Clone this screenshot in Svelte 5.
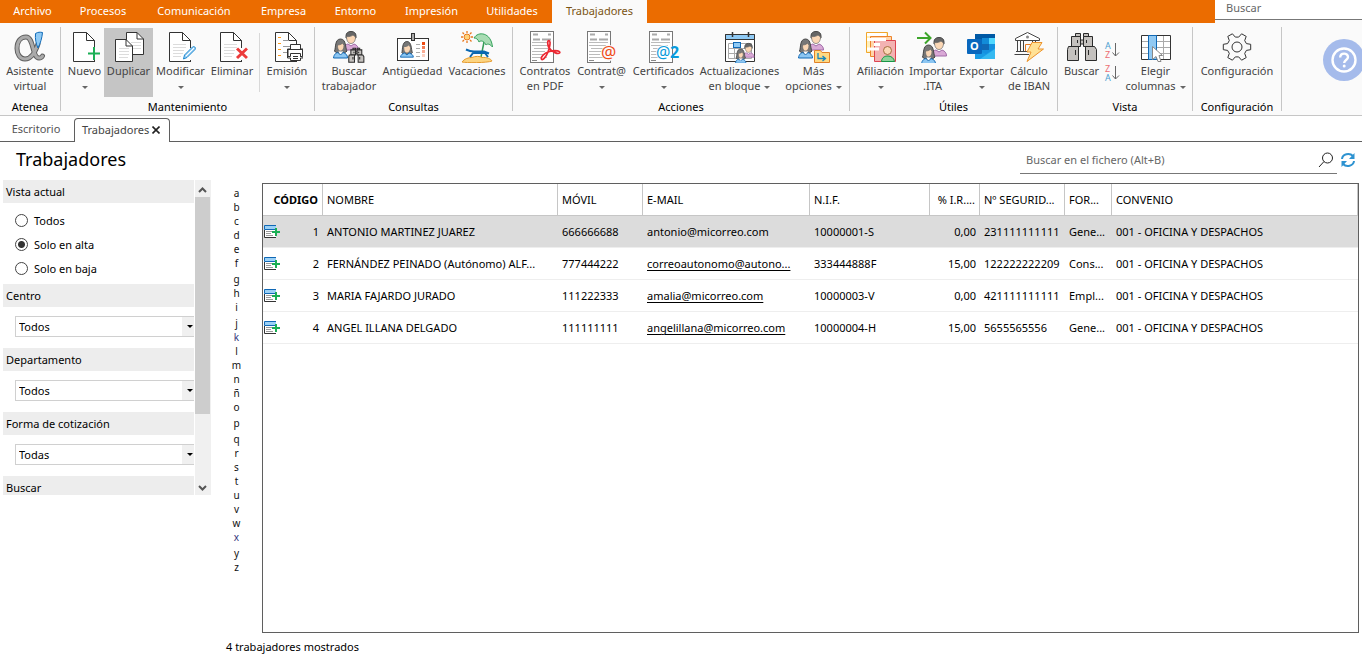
<script>
	const menu = [
		{ label: 'Archivo', width: 65 },
		{ label: 'Procesos', width: 76 },
		{ label: 'Comunicación', width: 106 },
		{ label: 'Empresa', width: 73 },
		{ label: 'Entorno', width: 71 },
		{ label: 'Impresión', width: 81 },
		{ label: 'Utilidades', width: 80 },
		{ label: 'Trabajadores', width: 95 }
	];

	const groups = [
		{ name: 'Atenea', tools: [{ icon: 'atenea', lines: ['Asistente', 'virtual'], width: 52 }] },
		{
			name: 'Mantenimiento',
			tools: [
				{ icon: 'nuevo', lines: ['Nuevo'], menu: true, width: 39 },
				{ icon: 'duplicar', lines: ['Duplicar'], width: 49 },
				{ icon: 'modificar', lines: ['Modificar'], menu: true, width: 55 },
				{ icon: 'eliminar', lines: ['Eliminar'], width: 48 },
				{ icon: 'emision', lines: ['Emisión'], menu: true, width: 46, split: true }
			]
		},
		{
			name: 'Consultas',
			tools: [
				{ icon: 'buscarTrabajador', lines: ['Buscar', 'trabajador'], width: 60 },
				{ icon: 'antiguedad', lines: ['Antigüedad'], width: 67 },
				{ icon: 'vacaciones', lines: ['Vacaciones'], width: 62 }
			]
		},
		{
			name: 'Acciones',
			tools: [
				{ icon: 'pdf', lines: ['Contratos', 'en PDF'], width: 56 },
				{ icon: 'contrata', lines: ['Contrat@'], menu: true, width: 57 },
				{ icon: 'certificados', lines: ['Certificados'], menu: true, width: 67 },
				{ icon: 'bloque', lines: ['Actualizaciones', 'en bloque'], menu: true, width: 85 },
				{ icon: 'opciones', lines: ['Más', 'opciones'], menu: true, width: 63 }
			]
		},
		{
			name: 'Útiles',
			tools: [
				{ icon: 'afiliacion', lines: ['Afiliación'], menu: true, width: 53 },
				{ icon: 'importar', lines: ['Importar', '.ITA'], width: 51 },
				{ icon: 'exportar', lines: ['Exportar'], menu: true, width: 47 },
				{ icon: 'iban', lines: ['Cálculo', 'de IBAN'], width: 48 }
			]
		},
		{
			name: 'Vista',
			tools: [
				{ icon: 'buscar', lines: ['Buscar'], width: 39 },
				{ icon: 'orden', width: 22 },
				{ icon: 'columnas', lines: ['Elegir', 'columnas'], menu: true, width: 65 }
			]
		},
		{ name: 'Configuración', tools: [{ icon: 'config', lines: ['Configuración'], width: 80 }] }
	];

	const views = ['Todos', 'Solo en alta', 'Solo en baja'];
	const filters = [
		{ id: 'centro', label: 'Centro', value: 'Todos' },
		{ id: 'departamento', label: 'Departamento', value: 'Todos' },
		{ id: 'cotizacion', label: 'Forma de cotización', value: 'Todas' }
	];
	const letters = 'abcdefghijklmnñopqrstuvwxyz'.split('');

	const columns = [
		'CÓDIGO',
		'NOMBRE',
		'MÓVIL',
		'E-MAIL',
		'N.I.F.',
		'% I.R....',
		'Nº SEGURID...',
		'FOR...',
		'CONVENIO'
	];

	const workers = [
		{ id: 1, name: 'ANTONIO MARTINEZ JUAREZ', phone: '666666688', email: 'antonio@micorreo.com', nif: '10000001-S', irpf: '0,00', ss: '231111111111', form: 'Gene...' },
		{ id: 2, name: 'FERNÁNDEZ PEINADO (Autónomo) ALF...', phone: '777444222', email: 'correoautonomo@autono...', nif: '333444888F', irpf: '15,00', ss: '122222222209', form: 'Cons...' },
		{ id: 3, name: 'MARIA FAJARDO JURADO', phone: '111222333', email: 'amalia@micorreo.com', nif: '10000003-V', irpf: '0,00', ss: '421111111111', form: 'Empl...' },
		{ id: 4, name: 'ANGEL ILLANA DELGADO', phone: '111111111', email: 'angelillana@micorreo.com', nif: '10000004-H', irpf: '15,00', ss: '5655565556', form: 'Gene...' }
	];

	let view = $state('Solo en alta');
	let selected = $state(1);
</script>

{#snippet page()}
	<path d="M4.5 1.5H17.5L25.5 9.5V30.5H4.5Z" fill="#fff" />
	<path d="M25.5 17V9.5L17.5 1.5H4.5V30.5H26M17.5 1.5V9.5H25.5M25.5 29V31" fill="none" stroke="#333" />
{/snippet}

{#snippet textLines()}
	<path d="M8 13.5H21M8 16.5H21M8 19.5H19M8 22.5H18M8 25.5H16" stroke="#dcdcdc" fill="none" />
{/snippet}

{#snippet form()}
	<rect x="1.5" y="0.5" width="23" height="31" fill="#fff" stroke="#777" />
	<path d="M4 3.5H9M19 3.5H22M4 8.5H11M13 8.5H22" stroke="#aaa" stroke-width="2" />
	<path d="M3 11.5H22M3 14.5H20M5 17.5H22M3 20.5H16M3 23.5H14M3 26.5H18" stroke="#bbb" />
	<path d="M3 29.5H8" stroke="#888" />
{/snippet}

{#snippet people()}
	<path d="M10 19C10 15 13 13.5 15 13L18 15L21 13C24 14 25.5 16 25.5 19Z" fill="#d9a9d6" stroke="#a06aa8" />
	<path d="M13 5C13 2 15 0.5 18 0.5S23 2 23 5V7H13Z" fill="#666" stroke="#444" />
	<path d="M13.5 5.5C16 6 19 5 20 4L22.5 6C22.5 10 20.5 12.5 18 12.5S13.5 10 13.5 5.5Z" fill="#fbd7b5" stroke="#666" stroke-width=".7" />
	<path d="M1.5 20C3 17 1.5 8 7.5 8S12 17 14 20C12 23 3 23 1.5 20Z" fill="#777" stroke="#444" />
	<path d="M0.5 27C1 23 3 22 5 21.5L7.5 24L10 21.5C13 22.5 14.5 24 14.5 27Z" fill="#8cc6f2" stroke="#1068b5" />
	<path d="M4.5 14C7 14 9 13 9.5 12L11 14.5C11 18 9.5 20 7.5 20S4.5 18 4.5 14Z" fill="#fbd7b5" stroke="#666" stroke-width=".7" />
	<path d="M6 20.5L7.5 23L9.5 20.5" fill="#fff" stroke="#fff" />
{/snippet}

{#snippet binoculars()}
	<g fill="#c4c1be" stroke="#2b2b2b">
		<path d="M9.5 2.5H14.5V5.5H9.5ZM17.5 2.5H22.5V5.5H17.5Z" />
		<path d="M13.5 9H18.5V13H13.5Z" />
		<path d="M5.5 5.5H14.5V15.5H5.5ZM17.5 5.5H26.5V15.5H17.5Z" />
		<path d="M2.5 15.5H12.5V29.5H1.5V18.5ZM19.5 15.5H28.5L30.5 18.5V29.5H19.5Z" />
		<path d="M11.5 9V12M20.5 9V12M9.5 19V24M22.5 19V24" />
	</g>
{/snippet}

{#snippet icon(name)}
	<svg class="icon" class:narrow={name === 'orden'} viewBox={name === 'orden' ? '0 0 18 48' : '0 0 32 32'} aria-hidden="true">
		{#if name === 'atenea'}
			<g fill="none" stroke-linecap="round">
				<path d="M24 13C21 22 17 28 11 28C6 28 3 23 3 17.5C3 10 7 6 12 6C20 6 18 27 25 27C27 27 28 26 28.5 25" stroke="#5f5f5f" stroke-width="5" />
				<path d="M24 13C21 22 17 28 11 28C6 28 3 23 3 17.5C3 10 7 6 12 6C20 6 18 27 25 27C27 27 28 26 28.5 25" stroke="#aaa" stroke-width="3" />
			</g>
			<path d="M21.5 2.5C24 1 26 1 28.5 1.5C28 7 26.5 12 24 17C22 13 21 8 21.5 2.5Z" fill="#8fcaf5" stroke="#116bb8" />
		{:else if name === 'nuevo'}
			{@render page()}
			<path d="M25 16V29M19 22.5H31" stroke="#1aae54" stroke-width="2" />
		{:else if name === 'duplicar'}
			<path d="M13.5 1.5H24L30.5 8V23.5H13.5Z" fill="#fff" stroke="#333" />
			<path d="M24 1.5V8H30.5" fill="none" stroke="#333" />
			<path d="M18 11.5H28M20 14.5H28M20 17.5H28" stroke="#dcdcdc" />
			<path d="M2.5 8.5H13L19.5 15V30.5H2.5Z" fill="#fff" stroke="#333" />
			<path d="M13 8.5V15H19.5" fill="none" stroke="#333" />
			<path d="M6 17.5H16M6 20.5H16M6 23.5H16M6 26.5H15" stroke="#dcdcdc" />
		{:else if name === 'modificar'}
			{@render page()}
			{@render textLines()}
			<path d="M18.5 28L19.5 24L27.5 16C29 14.7 31.3 16.5 30 18.5L22 26.5Z" fill="#a6d4f5" stroke="#1787d0" />
			<path d="M21 25L29 17" stroke="#fff" />
		{:else if name === 'eliminar'}
			{@render page()}
			{@render textLines()}
			<path d="M21 17.5L31 27M31 17.5L21 27" stroke="#fff" stroke-width="5" />
			<path d="M21 17.5L31 27M31 17.5L21 27" stroke="#ec3b3b" stroke-width="3" />
		{:else if name === 'emision'}
			{@render page()}
			<path d="M7 6.5H10M7 12.5H10M7 18.5H10M7 24.5H10" stroke="#ff9d1e" />
			<path d="M12 9.5H18M12 15.5H20M12 21.5H17" stroke="#999" />
			<path d="M19.5 13.5H29.5V18H32V27H29.5V29.5H19.5V27H16.5V18H19.5Z" fill="#fff" stroke="#333" />
			<path d="M17 18.5H31.5V25.5H29M17 18.5V25.5H19.5V22.5H29.5V25.5M22 25.5H27M22 27.5H27" fill="none" stroke="#333" />
		{:else if name === 'buscarTrabajador'}
			{@render people()}
			<g transform="translate(15 16) scale(.52)">
				<g stroke-width="2">{@render binoculars()}</g>
			</g>
		{:else if name === 'antiguedad'}
			<rect x="0.5" y="7.5" width="31" height="22" fill="#fff" stroke="#333" />
			<rect x="14.5" y="2.5" width="3" height="7" fill="#aaa" stroke="#333" />
			<g transform="translate(3 5) scale(.92)">
				<path d="M2 18C3 15 2 6 7.5 6S12 15 13.5 18C12 21 3 21 2 18Z" fill="#777" stroke="#444" />
				<path d="M0.5 23C1 20 3 19 5 18.5L7.5 20.5L10 18.5C13 19.5 14.5 21 14.5 23Z" fill="#8cc6f2" stroke="#1068b5" />
				<path d="M4.5 12C7 12 9 11 9.5 10L11 12.5C11 16 9.5 18 7.5 18S4.5 16 4.5 12Z" fill="#fbd7b5" />
			</g>
			<path d="M19 13.5H23M19 17.5H23M19 21.5H23M19 25.5H23" stroke="#aaa" />
			<rect x="25" y="11" width="3" height="3" fill="#ee4b12" />
			<rect x="25" y="15" width="3" height="3" fill="#f47a52" />
			<rect x="25" y="19" width="3" height="3" fill="#f9ab93" />
			<rect x="25" y="23" width="3" height="3" fill="#fcd0c2" />
		{:else if name === 'vacaciones'}
			<circle cx="6" cy="6" r="3" fill="#fdd27b" stroke="#e8781e" />
			<path d="M6 0V2M6 10V12M0 6H2M10 6H12M1.5 1.5L3 3M9 9L10.5 10.5M10.5 1.5L9 3M3 9L1.5 10.5" stroke="#e8781e" stroke-width="1.3" />
			<path d="M24 6L20 26" stroke="#339b55" stroke-width="1.5" />
			<path d="M13 7C17 0 30 1 31.5 16C28 12 26 13 25 14C23 10 20 9 18 11C17 8 15 7 13 7Z" fill="#a8dcb3" stroke="#35a35c" />
			<path d="M1 31C3 28 7 26.5 11 26.5C14 25 19 25 21 26.5C26 26 30 28 31 30C26 32 5 32 1 31Z" fill="#fcd480" stroke="#e59a2c" />
			<path d="M5 18.5C8 20 10 20.5 13 20.5H23L28 22.5M9 26L12 22H24L27 26" fill="none" stroke="#0967b1" stroke-width="2" />
		{:else if name === 'pdf'}
			{@render form()}
			<path d="M20 9.5C18 9.5 18.5 15 20.5 17.5C23 21 29 23.5 30.5 22S27 18.5 20.5 20.5C15 22 11.5 26 12.5 28S17 26 19 21C20.7 17 22 10 20 9.5Z" fill="#fff" stroke="#ec2832" stroke-width="1.7" />
		{:else if name === 'contrata'}
			{@render form()}
			<circle cx="23" cy="22" r="8" fill="#fafafa" />
			<text x="15" y="27" font-family="Noto Sans, sans-serif" font-size="17" fill="#f04b16">@</text>
		{:else if name === 'certificados'}
			{@render form()}
			<circle cx="16" cy="22" r="8" fill="#fff" />
			<text x="8" y="27" font-family="Noto Sans, sans-serif" font-size="16" fill="#099bdc">@<tspan font-weight="700" x="22">2</tspan></text>
		{:else if name === 'bloque'}
			<path d="M1.5 3.5H30.5V30.5H1.5Z" fill="#fff" stroke="#333" />
			<path d="M1.5 3.5H30.5V8.5H1.5Z" fill="#8fcaf5" stroke="#333" />
			<path d="M8.5 1V6M24.5 1V6" stroke="#333" stroke-width="1.5" />
			<path d="M4.5 12.5H27.5V27.5H4.5ZM4.5 17.5H27M4.5 22.5H15M10.5 12.5V27.5M16.5 12V20M22.5 12V16" fill="none" stroke="#aaa" />
			<rect x="9.5" y="11.5" width="7" height="5" fill="#8fcaf5" stroke="#1068b5" />
			<g transform="translate(11 12) scale(.75)">{@render people()}</g>
		{:else if name === 'opciones'}
			{@render people()}
			<path d="M16.5 19.5H22.5L24 21.5H31.5V31.5H16.5Z" fill="#ffd983" stroke="#e08127" />
			<path d="M20 22V27.5H27M24.5 25L27.5 27.5L24.5 30" fill="none" stroke="#1787bd" stroke-width="1.3" />
		{:else if name === 'afiliacion'}
			<path d="M1.5 1.5H22.5V21.5H1.5Z" fill="#fff0be" stroke="#f0a72c" />
			<path d="M5.5 5.5H26.5V25.5H5.5Z" fill="#ffd5aa" stroke="#ed842c" />
			<path d="M9.5 9.5H30.5V30.5H9.5Z" fill="#f3b2b2" stroke="#dc4450" />
			<path d="M2 3.5H21M2 8.5H21M9 13.5H15M2 18H14" stroke="#fff" stroke-width="3" />
			<path d="M16.5 30.5C17 26 20 25 23 25S29 27 29.5 30.5Z" fill="#8ed29a" stroke="#189645" />
			<circle cx="22.5" cy="19.5" r="4" fill="#fbd7b5" stroke="#a36b3e" />
		{:else if name === 'importar'}
			<g transform="translate(4 6)">{@render people()}</g>
			<path d="M0 7H13M8 1.5L13.5 7L8 12.5" fill="none" stroke="#3da52b" stroke-width="2" />
		{:else if name === 'exportar'}
			<path d="M9 3H29V28H9Z" fill="#1490df" />
			<path d="M9 3H29V9H9Z" fill="#0059a5" />
			<path d="M16 7H23V13H16Z" fill="#128bd8" />
			<path d="M23 7H29V13H23Z" fill="#50d8ff" />
			<path d="M16 13H23V19H16Z" fill="#1068b5" />
			<path d="M9 18L20 23L29 17V28H9Z" fill="#189be5" />
			<path d="M14 28L29 18V28Z" fill="#35b9f1" />
			<rect x="1" y="8" width="15" height="15" rx="1" fill="#0967bd" />
			<text x="4" y="19" font-family="Noto Sans, sans-serif" font-size="11" font-weight="700" fill="#fff">O</text>
		{:else if name === 'iban'}
			<path d="M2.5 9.5V7.5L14.5 1.5L26.5 7.5V9.5Z" fill="#fff" stroke="#444" />
			<circle cx="14.5" cy="6" r="1.5" fill="#888" />
			<path d="M4.5 10V20M7.5 10V20M10.5 10V20M19.5 10V20M22.5 10V14M3 20.5H16M1.5 23.5H16" stroke="#444" />
			<path d="M12.5 20V13.5H18.5V20" fill="none" stroke="#e57a20" />
			<path d="M19 11.5H29L25 18H30.5L14 30.5L18 21H14Z" fill="#ffe195" stroke="#ed932b" />
		{:else if name === 'buscar'}
			{@render binoculars()}
		{:else if name === 'orden'}
			<g font-family="Noto Sans, sans-serif" font-size="9">
				<text x="2" y="10" fill="#4c9ed0">A</text>
				<text x="2" y="19" fill="#ec6f75">Z</text>
				<text x="2" y="33" fill="#ec6f75">Z</text>
				<text x="2" y="42" fill="#4c9ed0">A</text>
			</g>
			<path d="M12.5 4V17M9.5 13.5L12.5 17L16 13.5M12.5 27V40M9.5 36.5L12.5 40L16 36.5" fill="none" stroke="#666" />
		{:else if name === 'columnas'}
			<path d="M1.5 4.5H30.5V28.5H1.5Z" fill="#fff" stroke="#333" />
			<path d="M2 10.5H30M2 16.5H30M2 22.5H30M23.5 5V28" stroke="#aaa" />
			<path d="M8.5 4.5H16.5V28.5H8.5Z" fill="#91c9f2" stroke="#1068b5" />
			<path d="M12.5 15.5V28.5L16 25.5L18 30.5H21L19 24.5H22.5Z" fill="#fff" stroke="#888" />
		{:else if name === 'config'}
			<g transform="translate(16 16)" fill="none" stroke="#333" stroke-linejoin="round">
				<path d="M9.4 -3.4L13.7 -2.7V2.7L9.4 3.4L7.7 6.4L9.2 10.6L4.6 13.2L1.7 9.9H-1.7L-4.6 13.2L-9.2 10.6L-7.7 6.4L-9.4 3.4L-13.7 2.7V-2.7L-9.4 -3.4L-7.7 -6.4L-9.2 -10.6L-4.6 -13.2L-1.7 -9.9H1.7L4.6 -13.2L9.2 -10.6L7.7 -6.4Z" />
				<circle r="5" />
			</g>
		{/if}
	</svg>
{/snippet}

<div class="app">
	<header class="menubar">
		<nav>
			{#each menu as item, i}
				<button class:active={i === menu.length - 1} style:width="{item.width}px">{item.label}</button>
			{/each}
		</nav>
		<input type="search" aria-label="Buscar" placeholder="Buscar" />
	</header>

	<div class="ribbon">
		{#each groups as group}
			<section>
				<div class="tools">
					{#each group.tools as tool}
						{#if tool.split}<span class="split"></span>{/if}
						<button class:pressed={tool.icon === 'duplicar'} style:width="{tool.width}px" aria-label={tool.lines ? null : 'Ordenar'}>
							{@render icon(tool.icon)}
							{#if tool.lines}
								<span>{tool.lines[0]}</span>
								{#if tool.lines[1] || tool.menu}
									<span>{tool.lines[1] ?? ''}{#if tool.menu}<i class:after={tool.lines[1]}></i>{/if}</span>
								{/if}
							{/if}
						</button>
					{/each}
				</div>
				<h2>{group.name}</h2>
			</section>
			<span class="divider"></span>
		{/each}
		<button class="help" aria-label="Ayuda">
			<svg viewBox="0 0 42 42" aria-hidden="true">
				<circle cx="21" cy="21" r="21" fill="#a5bbeb" />
				<circle cx="21" cy="21" r="11.5" fill="none" stroke="#fff" stroke-width="2.4" />
				<path d="M17.2 18.5C17.2 13.3 25 13.5 25 18C25 21 21.2 21 21.2 24" fill="none" stroke="#fff" stroke-width="2.4" />
				<circle cx="21.2" cy="27" r="1.5" fill="#fff" />
			</svg>
		</button>
	</div>

	<div class="doc-tabs">
		<button>Escritorio</button>
		<button class="current">
			Trabajadores
			<svg viewBox="0 0 8 8" aria-hidden="true"><path d="M.5 .5L7.5 7.5M7.5 .5L.5 7.5" stroke="#222" stroke-width="1.6" /></svg>
		</button>
		<span class="rest"></span>
	</div>

	<div class="title-row">
		<h1>Trabajadores</h1>
		<label class="file-search">
			<input type="text" placeholder="Buscar en el fichero (Alt+B)" aria-label="Buscar en el fichero" />
			<svg viewBox="0 0 16 16" aria-hidden="true"><circle cx="9.5" cy="6" r="5" fill="none" stroke="#222" /><path d="M6 9.5L1 15" stroke="#222" /></svg>
		</label>
		<button class="refresh" aria-label="Actualizar">
			<svg viewBox="0 0 16 16" aria-hidden="true">
				<path d="M2 7C2.5 2 9.5 .5 13 4M14 9C13.5 14 6.5 15.5 3 12" fill="none" stroke="#2e93d1" stroke-width="2" />
				<path d="M14.5 1V7H9ZM1.5 15V9H7Z" fill="#2e93d1" />
			</svg>
		</button>
	</div>

	<main>
		<aside>
			<div class="filters">
				<fieldset>
					<legend>Vista actual</legend>
					<div class="radios">
						{#each views as option}
							<label><input type="radio" name="vista" value={option} bind:group={view} />{option}</label>
						{/each}
					</div>
				</fieldset>
				{#each filters as filter}
					<label class="head" for={filter.id}>{filter.label}</label>
					<div class="select">
						<select id={filter.id}><option>{filter.value}</option></select>
					</div>
				{/each}
				<div class="head">Buscar</div>
			</div>
			<div class="scrollbar">
				<button aria-label="Subir"><svg viewBox="0 0 9 6" aria-hidden="true"><path d="M1 5L4.5 1.5L8 5" fill="none" stroke="#555" stroke-width="2" /></svg></button>
				<div class="thumb"></div>
				<button class="down" aria-label="Bajar"><svg viewBox="0 0 9 6" aria-hidden="true"><path d="M1 1L4.5 4.5L8 1" fill="none" stroke="#555" stroke-width="2" /></svg></button>
			</div>
		</aside>

		<nav class="letters">
			{#each letters as letter}
				<a href="#{letter}" class:tall={'gjpqy'.includes(letter)} class:blue={'kx'.includes(letter)}>{letter}</a>
			{/each}
		</nav>

		<div class="grid">
			<table>
				<colgroup>
					<col class="c-id" /><col class="c-name" /><col class="c-phone" /><col class="c-mail" /><col class="c-nif" />
					<col class="c-irpf" /><col class="c-ss" /><col class="c-form" /><col />
				</colgroup>
				<thead>
					<tr>
						{#each columns as column, i}
							<th class:right={i === 0 || i === 5} class:sorted={i === 0} scope="col">{column}</th>
						{/each}
					</tr>
				</thead>
				<tbody>
					{#each workers as worker}
						<tr class:selected={worker.id === selected} onclick={() => (selected = worker.id)}>
							<td class="code">
								<div>
									<svg viewBox="0 0 16 14" aria-hidden="true">
										<path d="M.5 .5H12V12.5H.5Z" fill="#fff" />
										<path d="M12 .5H.5V4.5H12" fill="#9bd0f5" stroke="#1068b5" />
										<path d="M.5 5V12.5H12" fill="none" stroke="#333" />
										<path d="M2 6.5H9M2 8.5H7M2 10.5H9" stroke="#999" />
										<path d="M12 3V11M8 7H16" stroke="#1aae54" stroke-width="2" />
									</svg>
									{worker.id}
								</div>
							</td>
							<td>{worker.name}</td>
							<td>{worker.phone}</td>
							<td class="mail"><a href="mailto:{worker.email}">{worker.email}</a></td>
							<td>{worker.nif}</td>
							<td class="right">{worker.irpf}</td>
							<td>{worker.ss}</td>
							<td>{worker.form}</td>
							<td>001 - OFICINA Y DESPACHOS</td>
						</tr>
					{/each}
				</tbody>
			</table>
		</div>
	</main>

	<footer>{workers.length} trabajadores mostrados</footer>
</div>

<style>
	:global(body) {
		background: #fff;
	}

	.app,
	button,
	input,
	select {
		font-family: 'Noto Sans', 'Open Sans', sans-serif;
		font-size: 11px;
		color: #000;
	}

	.app {
		display: flex;
		flex-direction: column;
		min-height: 100vh;
		overflow: hidden;
	}

	button {
		border: 0;
		padding: 0;
		background: none;
	}

	.menubar {
		display: flex;
		justify-content: space-between;
		height: 23px;
		background: #eb6c00;
	}

	.menubar nav {
		display: flex;
	}

	.menubar button {
		padding-bottom: 2px;
		color: #fff;
		white-space: nowrap;
	}

	.menubar .active {
		background: #fafafa;
		color: #7a5413;
	}

	.menubar input {
		box-sizing: border-box;
		width: 147px;
		height: 20px;
		padding: 0 11px 4px;
		border: 0;
		border-bottom: 1px solid #777;
		border-radius: 0;
		background: #fff;
		box-shadow: 0 3px #fafafa;
		appearance: none;
	}

	input::placeholder {
		color: #666;
		opacity: 1;
	}

	.ribbon {
		position: relative;
		display: flex;
		height: 92px;
		overflow: hidden;
		border-bottom: 1px solid #c6c6c6;
		background: #fafafa;
	}

	.ribbon section {
		padding: 5px 4px 0;
	}

	.divider {
		width: 1px;
		margin: 4px 0;
		background: #c6c6c6;
	}

	.tools {
		display: flex;
		height: 69px;
	}

	.tools button {
		display: flex;
		flex-direction: column;
		align-items: center;
		padding-top: 3px;
		color: #444;
		line-height: 15px;
		white-space: nowrap;
	}

	.tools .pressed {
		background: #c5c5c5;
	}

	.tools button span {
		min-height: 15px;
	}

	.split {
		width: 1px;
		margin: 5px 4px 5px 3px;
		background: #d8d8d8;
	}

	.icon {
		flex: none;
		width: 32px;
		height: 32px;
	}

	.icon.narrow {
		width: 18px;
		height: 48px;
		margin-top: 8px;
	}

	i {
		display: inline-block;
		border: 3px solid transparent;
		border-top-color: #666;
		border-bottom: 0;
		vertical-align: middle;
	}

	i.after {
		margin-left: 4px;
	}

	.ribbon h2 {
		margin: 2px 0 0;
		font-size: 11px;
		font-weight: 400;
		line-height: 15px;
		text-align: center;
		white-space: nowrap;
	}

	.help {
		position: absolute;
		top: 16px;
		right: -3px;
	}

	.help svg {
		display: block;
		width: 42px;
		height: 42px;
	}

	.doc-tabs {
		display: flex;
		height: 26px;
	}

	.doc-tabs button {
		box-sizing: border-box;
		width: 74px;
		padding-right: 2px;
		border-bottom: 1px solid #5f5f5f;
		color: #555;
	}

	.doc-tabs .current {
		width: 96px;
		margin-top: 2px;
		padding: 0 2px 3px 0;
		border: 1px solid #5f5f5f;
		border-bottom: 0;
		border-radius: 4px 4px 0 0;
		color: #444;
	}

	.doc-tabs svg {
		width: 8px;
		height: 8px;
	}

	.rest {
		flex: 1;
		border-bottom: 1px solid #5f5f5f;
	}

	.title-row {
		display: flex;
		align-items: flex-start;
		height: 38px;
		padding: 0 6px 0 16px;
	}

	h1 {
		flex: 1;
		margin: 4px 0 0;
		font-size: 18px;
		font-weight: 400;
		line-height: 26px;
	}

	.file-search {
		display: flex;
		align-items: flex-end;
		box-sizing: border-box;
		width: 317px;
		height: 32px;
		padding: 0 3px 5px 6px;
		border-bottom: 1px solid #777;
	}

	.file-search input {
		flex: 1;
		padding: 0 0 1px;
		border: 0;
		outline: 0;
	}

	.file-search svg,
	.refresh svg {
		display: block;
		width: 16px;
		height: 16px;
	}

	.refresh {
		margin: 10px 0 0 3px;
	}

	main {
		display: flex;
		flex: 1;
		align-items: flex-start;
		padding: 0 3px;
	}

	aside {
		display: flex;
		width: 208px;
		height: 315px;
	}

	.filters {
		flex: 1;
		margin-right: 1px;
		overflow: hidden;
	}

	fieldset {
		margin: 0;
		padding: 0;
		border: 0;
	}

	legend,
	.head {
		display: block;
		box-sizing: border-box;
		width: 100%;
		height: 23px;
		padding: 0 3px;
		background: #ededed;
		line-height: 23px;
	}

	.radios {
		padding: 5px 12px 4px;
	}

	.radios label {
		display: flex;
		align-items: center;
		gap: 6px;
		height: 24px;
	}

	.radios input {
		box-sizing: border-box;
		width: 13px;
		height: 13px;
		margin: 0;
		border: 1px solid #444;
		border-radius: 50%;
		background: #fff;
		appearance: none;
	}

	.radios input:checked {
		background: radial-gradient(circle, #333 3px, #fff 4px);
	}

	.select {
		position: relative;
		margin: 9px 0 11px 12px;
	}

	select {
		display: block;
		box-sizing: border-box;
		width: 100%;
		height: 21px;
		padding: 0 3px;
		border: 1px solid #d0d0d0;
		border-right: 0;
		border-radius: 0;
		background: linear-gradient(to left, #f0f0f0 12px, #fff 12px);
		appearance: none;
	}

	.select::after {
		content: '';
		position: absolute;
		top: 9px;
		right: 1px;
		border: 3px solid transparent;
		border-top-color: #000;
		border-bottom: 0;
		pointer-events: none;
	}

	.scrollbar {
		display: flex;
		flex-direction: column;
		width: 16px;
		background: #f0f0f0;
	}

	.scrollbar button {
		height: 17px;
		margin-right: 1px;
	}

	.scrollbar svg {
		width: 9px;
		height: 6px;
	}

	.thumb {
		height: 217px;
		margin-right: 1px;
		background: #cdcdcd;
	}

	.scrollbar .down {
		margin-top: auto;
	}

	.letters {
		display: flex;
		flex-direction: column;
		align-items: center;
		width: 51px;
		padding-top: 6px;
		font-size: 10px;
		line-height: 14px;
	}

	.letters a {
		color: #111;
		text-decoration: none;
	}

	.letters .tall {
		padding-top: 2px;
	}

	.letters .blue {
		color: #34347c;
	}

	.grid {
		flex: 1;
		align-self: stretch;
		min-width: 0;
		margin-top: 3px;
		border: 1px solid #5f5f5f;
	}

	table {
		width: 100%;
		border-collapse: separate;
		border-spacing: 0;
		table-layout: fixed;
	}

	.c-id {
		width: 60px;
	}

	.c-name {
		width: 235px;
	}

	.c-phone,
	.c-ss {
		width: 85px;
	}

	.c-mail {
		width: 167px;
	}

	.c-nif {
		width: 120px;
	}

	.c-irpf {
		width: 50px;
	}

	.c-form {
		width: 47px;
	}

	th,
	td {
		box-sizing: border-box;
		height: 32px;
		padding: 0 4px;
		font-weight: 400;
		text-align: left;
		white-space: nowrap;
	}

	th {
		border-right: 1px solid #c6c6c6;
		border-bottom: 1px solid #c6c6c6;
	}

	td {
		border-bottom: 1px solid #eee;
	}

	.sorted {
		font-weight: 700;
	}

	.right {
		text-align: right;
	}

	.code {
		padding-left: 1px;
	}

	.code div {
		display: flex;
		align-items: center;
		justify-content: space-between;
	}

	.code svg {
		width: 16px;
		height: 14px;
	}

	.selected td {
		background: #dcdcdc;
	}

	.mail a {
		color: #000;
		text-underline-offset: 2px;
	}

	.selected .mail a {
		text-decoration: none;
	}

	footer {
		height: 32px;
		padding-left: 226px;
		line-height: 28px;
	}
</style>
